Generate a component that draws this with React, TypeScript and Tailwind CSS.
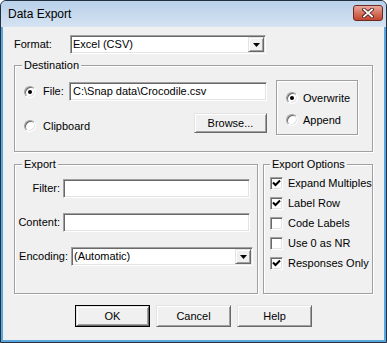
import React from "react";

const sunken =
  "bg-white border border-t-[#a0a0a0] border-l-[#a0a0a0] border-r-white border-b-white shadow-[inset_1px_1px_0_#696969,inset_-1px_-1px_0_#e3e3e3]";
const raised =
  "bg-[#f0f0f0] border border-t-[#e3e3e3] border-l-[#e3e3e3] border-r-[#696969] border-b-[#696969] shadow-[inset_1px_1px_0_#fff,inset_-1px_-1px_0_#a0a0a0]";
const etched = "relative border border-[#a0a0a0] shadow-[inset_1px_1px_0_#fff,1px_1px_0_#fff]";

function Legend({ text, left }: { text: string; left: string }) {
  return (
    <span className={`absolute -top-[7px] ${left} px-[2px] bg-[#f0f0f0] leading-[13px]`}>{text}</span>
  );
}

function Combo({ value, className }: { value: string; className: string }) {
  return (
    <div className={`${sunken} h-[19px] flex items-center p-[1px] ${className}`}>
      <span className="flex-1 pl-[1px] leading-[13px]">{value}</span>
      <span className={`${raised} w-[16px] h-full flex items-center justify-center`}>
        <svg width="7" height="4" viewBox="0 0 7 4">
          <path d="M0 0h7L3.5 4z" fill="#000" />
        </svg>
      </span>
    </div>
  );
}

function Radio({ checked }: { checked?: boolean }) {
  return (
    <span className="w-[12px] h-[12px] rounded-full bg-white border border-t-[#a0a0a0] border-l-[#a0a0a0] border-r-white border-b-white shadow-[inset_1px_1px_0_#696969,inset_-1px_-1px_0_#e3e3e3] flex items-center justify-center shrink-0">
      {checked && <span className="w-[4px] h-[4px] rounded-full bg-black" />}
    </span>
  );
}

function Check({ label, checked }: { label: string; checked?: boolean }) {
  return (
    <div className="h-[20px] flex items-center">
      <span className={`${sunken} w-[13px] h-[13px] flex items-center justify-center shrink-0`}>
        {checked && (
          <svg width="9" height="9" viewBox="0 0 9 9">
            <path d="M1 3.5l2.5 2.5L8 1.5" stroke="#000" strokeWidth="2" fill="none" />
          </svg>
        )}
      </span>
      <span className="ml-[5px]">{label}</span>
    </div>
  );
}

function Button({ label, className = "" }: { label: string; className?: string }) {
  return <div className={`${raised} flex items-center justify-center ${className}`}>{label}</div>;
}

export default function App() {
  return (
    <div className="w-[387px] h-[343px] border border-[#22303f] rounded-t-[6px] overflow-hidden flex flex-col bg-[#5aa6de] text-[11px] text-black font-['Liberation_Sans',Arial,sans-serif]">
      {/* Title bar */}
      <div className="h-[26px] shrink-0 flex items-start bg-gradient-to-b from-[#b9d1ea] to-[#d5e3f2]">
        <span className="pl-[7px] h-full flex items-center text-[12px]">Data Export</span>
        <div className="ml-auto mr-[3px] mt-[4px] w-[30px] h-[16px] rounded-[3px] border border-[#6b2b22] bg-gradient-to-b from-[#e9a99c] via-[#d6735f] to-[#c2452e] flex items-center justify-center">
          <svg width="12" height="10" viewBox="0 0 12 10">
            <path d="M2 1.5l8 7M10 1.5l-8 7" stroke="#4a1f1a" strokeWidth="3.6" strokeLinecap="square" />
            <path d="M2 1.5l8 7M10 1.5l-8 7" stroke="#fff" strokeWidth="1.8" strokeLinecap="square" />
          </svg>
        </div>
      </div>

      {/* Client area */}
      <div className="flex-1 flex flex-col px-[2px] pb-[2px]">
        <div className="flex-1 bg-[#f0f0f0] pt-[8px] px-[11px] flex flex-col">
          <div className="flex items-center h-[19px]">
            <span className="w-[56px]">Format:</span>
            <Combo value="Excel (CSV)" className="w-[196px]" />
          </div>

          {/* Destination */}
          <div className={`${etched} mt-[11px] w-[359px] h-[87px] flex items-start pl-[9px]`}>
            <Legend text="Destination" left="left-[7px]" />
            <div className="w-[243px] pt-[16px] flex flex-col">
              <div className="flex items-center h-[19px]">
                <Radio checked />
                <span className="ml-[7px] w-[26px]">File:</span>
                <div className={`${sunken} w-[198px] h-[19px] flex items-center pl-[3px]`}>
                  C:\Snap data\Crocodile.csv
                </div>
              </div>
              <div className="flex items-center h-[20px] mt-[12px]">
                <div className="flex items-center mt-[6px]">
                  <Radio />
                  <span className="ml-[7px]">Clipboard</span>
                </div>
                <Button label="Browse..." className="ml-auto w-[73px] h-[20px]" />
              </div>
            </div>
            <div className={`${etched} ml-[9px] mt-[14px] w-[82px] h-[55px] pl-[9px] pt-[6px] flex flex-col`}>
              <div className="h-[22px] flex items-center">
                <Radio checked />
                <span className="ml-[5px]">Overwrite</span>
              </div>
              <div className="h-[22px] flex items-center">
                <Radio />
                <span className="ml-[5px]">Append</span>
              </div>
            </div>
          </div>

          <div className="flex gap-[5px] mt-[12px] h-[130px]">
            {/* Export */}
            <div className={`${etched} w-[244px] pt-[14px] flex flex-col gap-[15px]`}>
              <Legend text="Export" left="left-[7px]" />
              <div className="flex items-center h-[19px]">
                <span className="w-[45px] text-right">Filter:</span>
                <div className={`${sunken} ml-[3px] w-[187px] h-[19px]`} />
              </div>
              <div className="flex items-center h-[19px]">
                <span className="w-[45px] text-right">Content:</span>
                <div className={`${sunken} ml-[3px] w-[187px] h-[19px]`} />
              </div>
              <div className="flex items-center h-[19px]">
                <span className="w-[53px] text-right">Encoding:</span>
                <Combo value="(Automatic)" className="ml-[3px] w-[182px]" />
              </div>
            </div>

            {/* Export Options */}
            <div className={`${etched} w-[110px] pt-[8px] pl-[6px] flex flex-col`}>
              <Legend text="Export Options" left="left-[6px]" />
              <Check label="Expand Multiples" checked />
              <Check label="Label Row" checked />
              <Check label="Code Labels" />
              <Check label="Use 0 as NR" />
              <Check label="Responses Only" checked />
            </div>
          </div>

          <div className="flex justify-center gap-[6px] mt-[11px]">
            <div className="w-[75px] h-[22px] border border-black flex">
              <Button label="OK" className="flex-1" />
            </div>
            <Button label="Cancel" className="w-[75px] h-[22px]" />
            <Button label="Help" className="w-[75px] h-[22px]" />
          </div>
        </div>
      </div>
    </div>
  );
}
